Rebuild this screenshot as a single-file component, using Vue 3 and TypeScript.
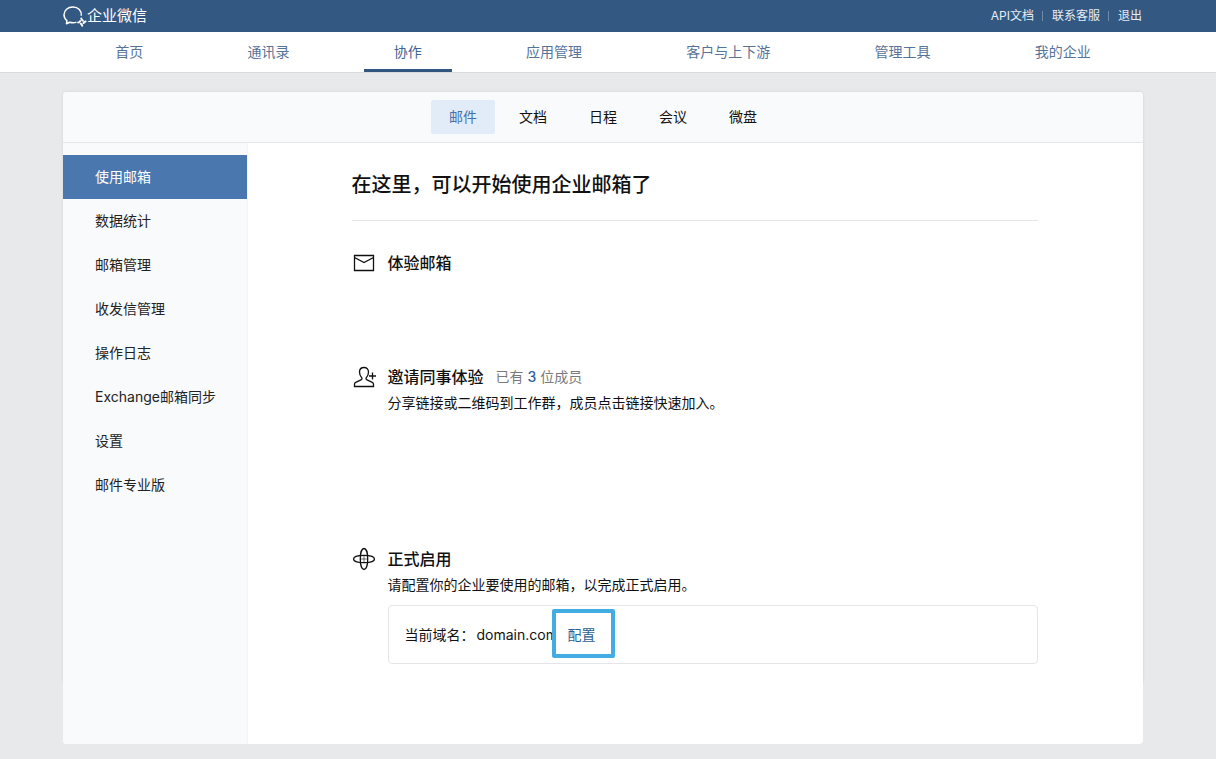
<script setup lang="ts">
interface NavItem {
  label: string
  active?: boolean
}

const topLinks: string[] = ['API文档', '联系客服', '退出']

const mainNav: NavItem[] = [
  { label: '首页' },
  { label: '通讯录' },
  { label: '协作', active: true },
  { label: '应用管理' },
  { label: '客户与上下游' },
  { label: '管理工具' },
  { label: '我的企业' },
]

const tabs: NavItem[] = [
  { label: '邮件', active: true },
  { label: '文档' },
  { label: '日程' },
  { label: '会议' },
  { label: '微盘' },
]

const sideNav: NavItem[] = [
  { label: '使用邮箱', active: true },
  { label: '数据统计' },
  { label: '邮箱管理' },
  { label: '收发信管理' },
  { label: '操作日志' },
  { label: 'Exchange邮箱同步' },
  { label: '设置' },
  { label: '邮件专业版' },
]

const memberCount = 3
const domain = 'domain.com'
</script>

<template>
  <div class="page">
    <header class="topbar">
      <div class="wrap topbar-inner">
        <a class="brand" href="#">
          <svg class="brand-logo" viewBox="0 0 24 22" aria-hidden="true">
            <path d="M18.300 10.800C18.800 5.800 15.300 2 10 2S1 5.500 1 9.800c0 2.400 1.100 4.400 2.900 5.800L3.500 18.700l3.300-1.500c1 .3 2.100.5 3.200.5 1.300 0 2.500-.2 3.500-.6" />
            <path class="brand-dots" d="M18.300 13.600c.2 1 .7 1.600 1.500 2M22.600 16.500c-1 .2-1.600.7-2 1.500M19.200 20.700c-.2-1-.7-1.600-1.500-2M15.200 17.600c1-.2 1.600-.7 2-1.500" />
          </svg>
          <span>企业微信</span>
        </a>
        <nav class="top-links" aria-label="账户">
          <a v-for="link in topLinks" :key="link" href="#">{{ link }}</a>
        </nav>
      </div>
    </header>

    <nav class="mainnav" aria-label="主导航">
      <div class="wrap mainnav-inner">
        <div v-for="item in mainNav" :key="item.label" class="mainnav-cell">
          <a href="#" :class="{ active: item.active }">{{ item.label }}</a>
        </div>
      </div>
    </nav>

    <div class="card-area">
      <div class="wrap card">
        <nav class="tabs" aria-label="协作">
          <a v-for="tab in tabs" :key="tab.label" href="#" :class="{ active: tab.active }">{{ tab.label }}</a>
        </nav>
        <div class="body">
          <nav class="side" aria-label="邮件">
            <a v-for="item in sideNav" :key="item.label" href="#" :class="{ active: item.active }">{{ item.label }}</a>
          </nav>
          <main class="main">
            <div class="content">
              <h1>在这里，可以开始使用企业邮箱了</h1>

              <section class="step step-try">
                <svg class="icon" viewBox="0 0 24 24" aria-hidden="true">
                  <path d="M2.500 4.500h19v15h-19zM2.500 6.500l9.500 5 9.500-5" />
                </svg>
                <div class="step-body">
                  <h2>体验邮箱</h2>
                </div>
              </section>

              <section class="step step-invite">
                <svg class="icon" viewBox="0 0 24 24" aria-hidden="true">
                  <path d="M12 2.500c-2.700 0-4.500 1.900-4.500 4.600 0 2.300.8 4.200 2.200 5.600.5.500.4 1.600-.3 2l-5.700 2.700c-.8.400-1.200.9-1.200 1.800v2.300h19v-2.300c0-.9-.4-1.400-1.200-1.800l-5.700-2.700c-.7-.4-.8-1.500-.3-2 1.400-1.400 2.200-3.300 2.200-5.600 0-2.700-1.800-4.600-4.500-4.600z" />
                  <path d="M20.500 7.500v7M17 11h7" />
                </svg>
                <div class="step-body">
                  <h2>邀请同事体验<span class="count">已有 <b>{{ memberCount }}</b> 位成员</span></h2>
                  <p>分享链接或二维码到工作群，成员点击链接快速加入。</p>
                </div>
              </section>

              <section class="step">
                <svg class="icon" viewBox="0 0 24 24" aria-hidden="true">
                  <path d="M12 1.500c2.500 0 3.700 5.500 3.700 10.500s-1.200 10.500-3.700 10.500-3.700-5.500-3.700-10.500 1.200-10.500 3.700-10.500z" />
                  <path d="M1.500 12c0-2.500 5.500-3.700 10.500-3.700s10.500 1.200 10.500 3.700-5.500 3.700-10.500 3.700-10.500-1.200-10.500-3.700z" />
                  <path class="fine" d="M12 8.300v7.400M8.300 12h7.400" />
                </svg>
                <div class="step-body">
                  <h2>正式启用</h2>
                  <p>请配置你的企业要使用的邮箱，以完成正式启用。</p>
                  <div class="domain">
                    <span>当前域名：</span>
                    <span class="domain-name">{{ domain }}<a class="configure" href="#">配置</a></span>
                  </div>
                </div>
              </section>
            </div>
          </main>
        </div>
      </div>
    </div>
  </div>
</template>

<style>
body {
  margin: 0;
  background: #e7e9eb;
}
</style>

<style scoped>
.page {
  font-family: Inter, "Noto Sans CJK SC", sans-serif;
  font-size: 14px;
  line-height: 22px;
  color: #111;
}

a {
  color: inherit;
  text-decoration: none;
}

h1,
h2,
p {
  margin: 0;
}

.topbar,
.mainnav,
.card-area {
  padding-right: 10px;
}

.wrap {
  max-width: 1080px;
  margin: 0 auto;
}

.topbar {
  background: #335882;
  color: #fff;
}

.topbar-inner {
  display: flex;
  align-items: center;
  justify-content: space-between;
  height: 32px;
}

.brand {
  display: flex;
  align-items: center;
  font-size: 15px;
}

.brand-logo {
  width: 24px;
  height: 22px;
  fill: none;
  stroke: #fff;
  stroke-width: 1.5;
  stroke-linejoin: round;
}

.brand-dots {
  stroke-width: 2;
  stroke-linecap: round;
}

.top-links {
  display: flex;
  padding-right: 1px;
  font-size: 12px;
  color: #e6edf5;
}

.top-links a + a {
  display: flex;
  align-items: center;
}

.top-links a + a::before {
  content: "";
  width: 1px;
  height: 10px;
  margin: 0 9px 0 8px;
  background: #6f8bac;
}

.mainnav {
  background: #fff;
  border-bottom: 1px solid #d9dadc;
  color: #577397;
}

.mainnav-inner {
  display: flex;
}

.mainnav-cell {
  flex: 1 1 auto;
  display: flex;
  justify-content: center;
}

.mainnav-cell a {
  padding: 0 30px;
  height: 37px;
  line-height: 40px;
  border-bottom: 3px solid transparent;
}

.mainnav-cell a.active {
  border-bottom-color: #32567f;
  color: #416492;
}

.card-area {
  padding-top: 19px;
  padding-bottom: 15px;
  isolation: isolate;
}

.card {
  position: relative;
  border-radius: 4px;
  background: #fff;
}

.card::before {
  content: "";
  position: absolute;
  z-index: -1;
  inset: 0 0 60px;
  border-radius: 4px;
  box-shadow: 0 0 3px #d0d2d4;
}

.tabs {
  display: flex;
  justify-content: center;
  gap: 6px;
  padding: 8px 0;
  border-bottom: 1px solid #e4e6e9;
  border-radius: 4px 4px 0 0;
  background: #f9fafc;
}

.tabs a {
  padding: 0 18px;
  line-height: 34px;
  border-radius: 2px;
}

.tabs a.active {
  background: #e1ecf8;
  color: #4571a8;
}

.body {
  display: flex;
  min-height: 601px;
}

.side {
  flex: 0 0 184px;
  display: flex;
  flex-direction: column;
  padding-top: 12px;
  border-right: 1px solid #f3f4f6;
  border-radius: 0 0 0 4px;
  background: #f9fafc;
  color: #222;
}

.side a {
  padding-left: 32px;
  line-height: 44px;
}

.side a.active {
  background: #4a77ad;
  color: #fff;
}

.main {
  flex: 1;
  padding-right: 2px;
}

.content {
  max-width: 686px;
  margin: 0 auto;
  padding-top: 27px;
}

h1 {
  padding-bottom: 20px;
  border-bottom: 1px solid #e4e5e7;
  font-size: 20px;
  line-height: 30px;
  font-weight: 500;
}

h2 {
  display: flex;
  align-items: center;
  font-size: 16px;
  line-height: 24px;
  font-weight: 500;
}

.step {
  display: flex;
  gap: 12px;
}

.step-try {
  margin-top: 30px;
  min-height: 114px;
}

.step-invite {
  min-height: 182px;
}

.step-body {
  flex: 1;
}

.icon {
  width: 24px;
  height: 24px;
  fill: none;
  stroke: #111;
  stroke-width: 1.3;
}

.fine {
  stroke-width: 0.6;
}

.step p {
  margin-top: 3px;
}

.count {
  margin-left: 12px;
  font-size: 14px;
  font-weight: 400;
  color: #7a7a7a;
}

.count b {
  font-weight: 500;
  color: #2a5f9e;
}

.domain {
  display: flex;
  gap: 2px;
  margin-top: 9px;
  padding: 18px 16px 17px;
  border: 1px solid #e4e5e7;
  border-radius: 4px;
}

.domain-name {
  position: relative;
}

.configure {
  position: absolute;
  top: -15px;
  left: 75px;
  padding: 11px 15px 8px 12px;
  border: 4px solid #43ace3;
  border-radius: 2px;
  background: #fff;
  color: #2a5f91;
  line-height: 22px;
  white-space: nowrap;
}
</style>
